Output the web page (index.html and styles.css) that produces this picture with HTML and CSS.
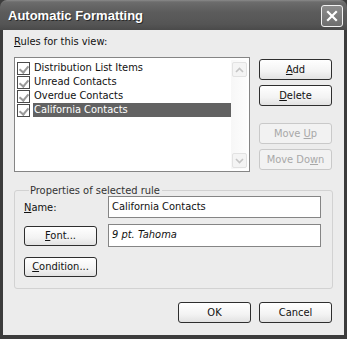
FILE: index.html
```html
<!DOCTYPE html>
<html lang="en">
<head>
    <meta charset="UTF-8">
    <title>Automatic Formatting</title>
    <link rel="stylesheet" href="styles.css">
</head>
<body>
    <div class="window">
        <div class="titlebar">
            <span class="title">Automatic Formatting</span>
            <span class="close">
                <svg width="12" height="12" viewBox="0 0 12 12">
                    <path d="M2 2 L10 10 M10 2 L2 10" stroke="#fff" stroke-width="2.2" stroke-linecap="square"/>
                </svg>
            </span>
        </div>

        <div class="content">
            <div class="label"><u>R</u>ules for this view:</div>

            <div class="rules-row">
                <div class="listbox">
                    <ul class="rules">
                        <li><span class="check"></span><span class="item">Distribution List Items</span></li>
                        <li><span class="check"></span><span class="item">Unread Contacts</span></li>
                        <li><span class="check"></span><span class="item">Overdue Contacts</span></li>
                        <li><span class="check"></span><span class="item selected">California Contacts</span></li>
                    </ul>
                    <div class="scrollbar">
                        <span class="arrow">
                            <svg width="9" height="6" viewBox="0 0 9 6"><path d="M1 5 L4.5 1.5 L8 5" fill="none" stroke="#c4c4c4" stroke-width="1.6"/></svg>
                        </span>
                        <span class="arrow">
                            <svg width="9" height="6" viewBox="0 0 9 6"><path d="M1 1 L4.5 4.5 L8 1" fill="none" stroke="#c4c4c4" stroke-width="1.6"/></svg>
                        </span>
                    </div>
                </div>

                <div class="side-buttons">
                    <button class="btn"><u>A</u>dd</button>
                    <button class="btn"><u>D</u>elete</button>
                    <button class="btn disabled move-up">Move <u>U</u>p</button>
                    <button class="btn disabled">Move Do<u>w</u>n</button>
                </div>
            </div>

            <fieldset class="group">
                <legend>Properties of selected rule</legend>
                <div class="props">
                    <div class="prop-label"><u>N</u>ame:</div>
                    <div class="textbox">California Contacts</div>
                    <button class="btn"><u>F</u>ont...</button>
                    <div class="textbox italic">9 pt. Tahoma</div>
                    <button class="btn condition"><u>C</u>ondition...</button>
                </div>
            </fieldset>

            <div class="footer">
                <button class="btn">OK</button>
                <button class="btn">Cancel</button>
            </div>
        </div>
    </div>
</body>
</html>
```

FILE: styles.css
```css
:root {
    --face: #ececec;
    --frame: #3c3c3c;
    --text: #111;
    --muted: #a8a8a8;
    --edge: #858585;
    --ui-font: "DejaVu Sans Condensed", "Liberation Sans", sans-serif;
}

* {
    box-sizing: border-box;
    margin: 0;
    padding: 0;
}

body {
    background: #fff;
    font-family: var(--ui-font);
    font-size: 11px;
    color: var(--text);
}

.window {
    width: 347px;
    height: 339px;
    background: var(--frame);
    padding: 0 3px 4px 3px;
    display: flex;
    flex-direction: column;
}

.titlebar {
    height: 30px;
    margin: 0 -3px;
    padding: 0 4px 0 8px;
    display: flex;
    align-items: center;
    justify-content: space-between;
    background: linear-gradient(#8a8a8a 0, #6c6c6c 2px, #5c5c5c 12px, #555 24px, #4a4a4a 30px);
    border-radius: 7px 7px 0 0;
}

.title {
    font-family: "Liberation Sans", sans-serif;
    font-weight: bold;
    font-size: 13px;
    color: #fff;
    text-shadow: 1px 1px 0 #2a2a2a;
    margin-top: 1px;
}

.close {
    width: 22px;
    height: 22px;
    margin-top: 2px;
    border: 1px solid #f2f2f2;
    border-radius: 3px;
    background: linear-gradient(#8c8c8c, #6e6e6e);
    display: flex;
    align-items: center;
    justify-content: center;
}

.content {
    flex: 1;
    background: var(--face);
    padding: 5px 11px 0 11px;
    display: flex;
    flex-direction: column;
}

.label {
    line-height: 13px;
    margin-bottom: 9px;
}

.rules-row {
    display: flex;
    gap: 9px;
}

.listbox {
    width: 236px;
    height: 115px;
    background: #fff;
    border: 1px solid var(--edge);
    display: flex;
    padding: 2px;
}

.rules {
    list-style: none;
    flex: 1;
    padding-top: 1px;
}

.rules li {
    height: 14px;
    display: flex;
    align-items: center;
}

.check {
    width: 13px;
    height: 13px;
    border: 1px solid #4a4a4a;
    margin-right: 3px;
    position: relative;
}

.check::after {
    content: "";
    position: absolute;
    left: 3px;
    top: 1px;
    width: 4px;
    height: 7px;
    border: solid #9a9a9a;
    border-width: 0 2px 2px 0;
    transform: rotate(40deg);
}

.item {
    line-height: 14px;
    padding: 0 1px;
}

.item.selected {
    flex: 1;
    background: #626262;
    color: #fff;
}

.scrollbar {
    width: 16px;
    background: linear-gradient(90deg, #f7f7f7, #fdfdfd);
    display: flex;
    flex-direction: column;
    justify-content: space-between;
    padding: 2px 0 1px 1px;
}

.arrow {
    width: 15px;
    height: 15px;
    border: 1px solid #e2e2e2;
    border-radius: 2px;
    background: #f4f4f4;
    display: flex;
    align-items: center;
    justify-content: center;
}

.side-buttons {
    display: flex;
    flex-direction: column;
    gap: 5px;
    padding-top: 2px;
}

.btn {
    width: 73px;
    height: 21px;
    font-family: var(--ui-font);
    font-size: 11px;
    color: var(--text);
    border: 1px solid #2e2e2e;
    border-radius: 3px;
    background: linear-gradient(#ffffff, #f3f3f3 60%, #e2e2e2);
}

.btn.disabled {
    color: var(--muted);
    border-color: #c9c9c9;
    background: #f2f2f2;
}

.btn.move-up {
    margin-top: 12px;
}

.group {
    margin-top: 12px;
    height: 105px;
    border: 1px solid #d2d2d2;
    border-radius: 3px;
    padding: 0 11px 0 9px;
}

.group legend {
    margin-left: 5px;
    padding: 0 2px 0 1px;
    color: #333;
    line-height: 13px;
}

.props {
    display: grid;
    grid-template-columns: 73px 213px;
    grid-template-rows: 22px 23px 20px;
    column-gap: 11px;
    row-gap: 6px;
    align-items: center;
    margin-top: -1px;
}

.props .btn {
    height: 20px;
}

.props .condition {
    margin-top: 7px;
}

.textbox {
    height: 100%;
    border: 1px solid var(--edge);
    background: #fff;
    padding: 3px 3px;
    line-height: 14px;
}

.textbox.italic {
    font-style: italic;
}

.footer {
    display: flex;
    justify-content: flex-end;
    gap: 8px;
    margin-top: 13px;
    padding-right: 1px;
}
```
